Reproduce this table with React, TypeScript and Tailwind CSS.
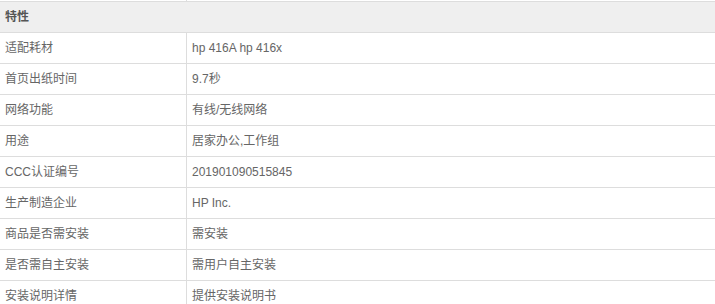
const specs: { key: string; value: string }[] = [
  { key: "适配耗材", value: "hp 416A hp 416x" },
  { key: "首页出纸时间", value: "9.7秒" },
  { key: "网络功能", value: "有线/无线网络" },
  { key: "用途", value: "居家办公,工作组" },
  { key: "CCC认证编号", value: "201901090515845" },
  { key: "生产制造企业", value: "HP Inc." },
  { key: "商品是否需安装", value: "需安装" },
  { key: "是否需自主安装", value: "需用户自主安装" },
  { key: "安装说明详情", value: "提供安装说明书" },
];

const App = () => {
  return (
    <div
      className="w-[715px] h-[304px] overflow-hidden bg-white text-[12px] text-[#666]"
      style={{ fontFamily: '"Liberation Sans", Arial, "Noto Sans CJK SC", sans-serif' }}
    >
      {/* tail of the previous group */}
      <div className="flex h-[2px] border-b border-[#ddd]">
        <div className="w-[187px] border-r border-[#ddd]" />
        <div className="flex-1" />
      </div>
      <div className="flex h-[31px] items-center border-b border-[#ddd] bg-[#efefef] px-[5px] font-bold text-[#555]">
        特性
      </div>
      {specs.map((row) => (
        <div key={row.key} className="flex h-[31px] border-b border-[#ddd]">
          <div className="flex w-[187px] items-center border-r border-[#ddd] px-[5px]">
            {row.key}
          </div>
          <div className="flex flex-1 items-center px-[5px]">{row.value}</div>
        </div>
      ))}
    </div>
  );
};

export default App;
